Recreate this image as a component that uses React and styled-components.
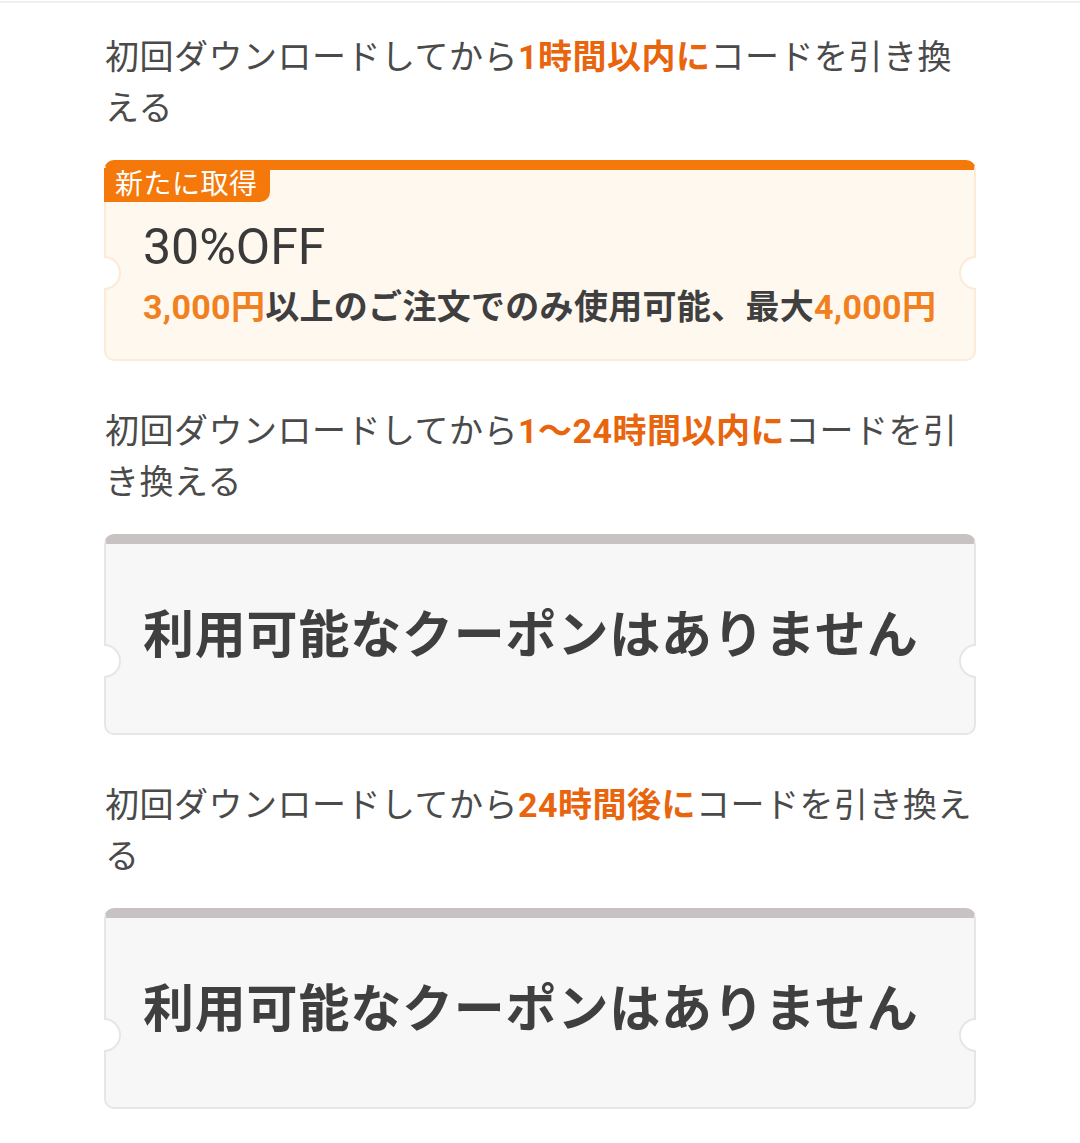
import React from "react";
import styled, { createGlobalStyle, css } from "styled-components";

const Global = createGlobalStyle`
  html, body { margin: 0; padding: 0; background: #ffffff; }
  body { font-family: Roboto, "Noto Sans CJK JP", sans-serif; }
`;

const TopLine = styled.div`
  height: 2px;
  margin-top: 1px;
  background: #f0f0f0;
`;

const Page = styled.main`
  display: flex;
  flex-direction: column;
  padding: 29px 104px 30px 104px;
  gap: 45px;
`;

const Section = styled.section`
  display: flex;
  flex-direction: column;
  gap: 26px;
`;

const Heading = styled.p`
  margin: 0;
  font-size: 34px;
  line-height: 51px;
  letter-spacing: 0.5px;
  color: #4a4a4a;
  padding-left: 1px;
`;

const Em = styled.strong`
  font-weight: 700;
  color: #e8650e;
`;

const themes = {
  orange: css`
    background: #fff8ef;
    border: 2px solid #fcebd6;
    border-top: 10px solid #f5780a;
  `,
  gray: css`
    background: #f7f7f7;
    border: 2px solid #e6e6e6;
    border-top: 10px solid #c9c2c2;
  `,
};

const Card = styled.div`
  position: relative;
  box-sizing: border-box;
  height: 201px;
  border-radius: 10px;
  display: flex;
  flex-direction: column;
  justify-content: center;
  padding: ${(p) => p.$padTop || 0}px 37px 0 37px;
  ${(p) => themes[p.$tone]}

  &::before,
  &::after {
    content: "";
    position: absolute;
    top: ${(p) => p.$notchTop}px;
    width: 30px;
    height: 30px;
    border-radius: 50%;
    background: #ffffff;
    border: 2px solid ${(p) => (p.$tone === "orange" ? "#fcebd6" : "#e6e6e6")};
  }
  &::before {
    left: -19px;
    clip-path: inset(-2px -2px -2px 17px);
  }
  &::after {
    right: -19px;
    clip-path: inset(-2px 17px -2px -2px);
  }
`;

const Tag = styled.span`
  position: absolute;
  top: -2px;
  left: -2px;
  background: #f5780a;
  color: #ffffff;
  font-size: 28px;
  line-height: 34px;
  letter-spacing: 0.5px;
  padding: 0 12px 0 11px;
  border-radius: 0 0 10px 0;
`;

const Amount = styled.div`
  font-size: 50px;
  line-height: 60px;
  color: #3a3a3a;
`;

const Condition = styled.div`
  margin-top: 8px;
  font-size: 34px;
  line-height: 44px;
  letter-spacing: 0.3px;
  font-weight: 700;
  color: #3f3f3f;
  white-space: nowrap;
`;

const Price = styled.span`
  color: #f08020;
`;

const Empty = styled.div`
  font-size: 51px;
  line-height: 64px;
  letter-spacing: 0.8px;
  font-weight: 700;
  color: #3f3f3f;
  white-space: nowrap;
  margin-top: -6px;
`;

export default function App() {
  return (
    <>
      <Global />
      <TopLine />
      <Page>
        <Section>
          <Heading>
            初回ダウンロードしてから<Em>1時間以内に</Em>コードを引き換える
          </Heading>
          <Card $tone="orange" $notchTop={86} $padTop={16}>
            <Tag>新たに取得</Tag>
            <Amount>30%OFF</Amount>
            <Condition>
              <Price>3,000円</Price>以上のご注文でのみ使用可能、最大
              <Price>4,000円</Price>
            </Condition>
          </Card>
        </Section>
        <Section>
          <Heading>
            初回ダウンロードしてから<Em>1〜24時間以内に</Em>コードを引き換える
          </Heading>
          <Card $tone="gray" $notchTop={100}>
            <Empty>利用可能なクーポンはありません</Empty>
          </Card>
        </Section>
        <Section>
          <Heading>
            初回ダウンロードしてから<Em>24時間後に</Em>コードを引き換える
          </Heading>
          <Card $tone="gray" $notchTop={100}>
            <Empty>利用可能なクーポンはありません</Empty>
          </Card>
        </Section>
      </Page>
    </>
  );
}
